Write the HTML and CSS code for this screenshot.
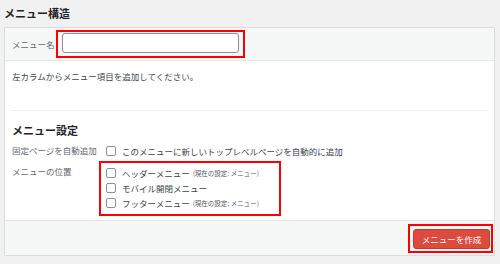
FILE: index.html
```html
<!DOCTYPE html>
<html lang="ja">

<head>
    <meta charset="UTF-8">
    <title>メニュー構造</title>
    <link rel="stylesheet" href="styles.css">
</head>

<body>
    <!-- 見出し -->
    <h2 class="page-title">メニュー構造</h2>

    <div class="menu-panel">
        <!-- メニュー名 -->
        <div class="panel-head">
            <label class="name-label" for="menu-name">メニュー名</label>
            <span class="mark name-mark">
                <input type="text" id="menu-name" class="name-input">
            </span>
        </div>

        <!-- 本体 -->
        <div class="panel-body">
            <p class="hint">左カラムからメニュー項目を追加してください。</p>

            <div class="settings">
                <h3 class="settings-title">メニュー設定</h3>

                <div class="setting-row">
                    <span class="setting-label">固定ページを自動追加</span>
                    <div class="setting-value">
                        <label class="check"><span class="box"></span>このメニューに新しいトップレベルページを自動的に追加</label>
                    </div>
                </div>

                <div class="setting-row">
                    <span class="setting-label">メニューの位置</span>
                    <div class="mark location-mark">
                        <label class="check"><span class="box"></span>ヘッダーメニュー<small>(現在の設定: メニュー)</small></label>
                        <label class="check"><span class="box"></span>モバイル開閉メニュー</label>
                        <label class="check"><span class="box"></span>フッターメニュー<small>(現在の設定: メニュー)</small></label>
                    </div>
                </div>
            </div>
        </div>

        <!-- フッター -->
        <div class="panel-foot">
            <span class="mark button-mark">
                <button class="create-button">メニューを作成</button>
            </span>
        </div>
    </div>
</body>

</html>
```

FILE: styles.css
```css
/* 全体 */
body {
    margin: 0;
    padding: 0 5px 0 4px;
    background-color: #f1f1f1;
    font-family: "Noto Sans CJK JP", "Liberation Sans", sans-serif;
    font-size: 8.5px;
    color: #3c434a;
}

.page-title {
    margin: 0;
    height: 27px;
    line-height: 26px;
    font-size: 11px;
    font-weight: bold;
    color: #1d2327;
}

/* パネル */
.menu-panel {
    background-color: #fff;
    border: 1px solid #dcdcde;
    height: 227px;
    display: flex;
    flex-direction: column;
}

.panel-head {
    background-color: #f6f7f7;
    border-bottom: 1px solid #e4e4e4;
    height: 32px;
    display: flex;
    align-items: center;
    padding-left: 7px;
}

.name-label {
    width: 44px;
    color: #646970;
}

/* 赤枠 */
.mark {
    border: 2px solid #f00;
}

.name-mark {
    display: flex;
    padding: 1px 4px 3px 4px;
}

.name-input {
    width: 177px;
    height: 20px;
    margin: 0;
    box-sizing: border-box;
    border: 1px solid #8c8f94;
    border-radius: 3px;
    background-color: #fff;
}

.panel-body {
    flex: 1;
    padding: 0 6px;
}

.hint {
    margin: 0;
    height: 49px;
    line-height: 30px;
    border-bottom: 1px solid #eee;
    padding-left: 1px;
}

.settings {
    padding-left: 1px;
}

.settings-title {
    margin: 0;
    height: 29px;
    line-height: 38px;
    font-size: 11px;
    font-weight: bold;
    color: #1d2327;
}

.setting-row {
    display: flex;
    align-items: flex-start;
}

.setting-label {
    width: 87px;
    line-height: 21px;
    color: #646970;
}

.setting-value {
    padding-left: 7px;
}

.check {
    display: flex;
    align-items: center;
    height: 21px;
    white-space: nowrap;
}

.location-mark {
    display: flex;
    flex-direction: column;
    padding: 2px 20px 4px 5px;
}

.location-mark .check {
    height: 15px;
}

.box {
    width: 10px;
    height: 10px;
    box-sizing: border-box;
    border: 1px solid #8c8f94;
    border-radius: 2px;
    background-color: #fff;
    margin-right: 6px;
}

.check small {
    font-size: 6.5px;
    margin-left: 3px;
    color: #50575e;
}

/* フッター */
.panel-foot {
    background-color: #f6f7f7;
    border-top: 1px solid #e4e4e4;
    height: 34px;
    display: flex;
    align-items: center;
    justify-content: flex-end;
    padding-right: 1px;
}

.button-mark {
    display: flex;
    padding: 3px 1px 2px 3px;
}

.create-button {
    width: 77px;
    height: 20px;
    margin: 0;
    padding: 0;
    border: 1px solid #c9392c;
    border-radius: 3px;
    background-color: #dd4b3e;
    color: #fff;
    font-family: "Noto Sans CJK JP", "Liberation Sans", sans-serif;
    font-size: 8.5px;
}
```
